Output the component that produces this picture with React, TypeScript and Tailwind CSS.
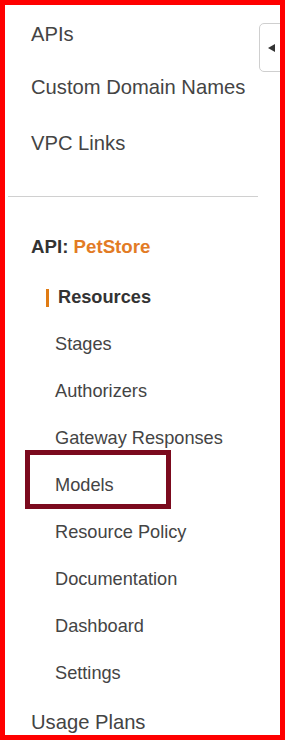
import React from 'react';

const subItems = [
  'Stages',
  'Authorizers',
  'Gateway Responses',
  'Models',
  'Resource Policy',
  'Documentation',
  'Dashboard',
  'Settings',
];

export default function App() {
  return (
    <div className="relative w-[285px] h-[740px] overflow-hidden border-[5px] border-[#ff0000] bg-white text-[#444] font-['Liberation_Sans',Arial,sans-serif]">
      {/* collapse toggle */}
      <button className="absolute top-[18px] right-[-12px] w-[33px] h-[49px] rounded-l-[5px] border border-[#cfcfcf] bg-white flex items-center pl-[8px]">
        <span className="block w-0 h-0 border-y-[4.5px] border-y-transparent border-r-[7px] border-r-[#333]" />
      </button>

      <nav>
        <ul className="text-[20.2px] leading-[24px]">
          <li className="mt-[17px] pl-[26px]">APIs</li>
          <li className="mt-[29px] pl-[26px]">Custom Domain Names</li>
          <li className="mt-[32px] pl-[26px]">VPC Links</li>
        </ul>

        <div className="mt-[41px] ml-[3px] w-[250px] h-px bg-[#d0d0d0]" />

        <div className="mt-[39px] pl-[26px] text-[18.7px] leading-[22px] font-bold text-[#333]">
          API: <span className="text-[#e27b25]">PetStore</span>
        </div>

        <ul className="mt-[16px] text-[18.2px]">
          <li className="relative h-[47px] flex items-center pl-[53px] font-bold text-[#333]">
            <span className="absolute left-[41px] top-[15px] w-[3px] h-[18px] bg-[#e07b13]" />
            Resources
          </li>
          {subItems.map((item) => (
            <li key={item} className="relative h-[47px] flex items-center pl-[50px]">
              {item === 'Models' && (
                <span className="absolute left-[20px] top-[-12px] w-[146px] h-[59px] border-[5px] border-[#7b0a1e]" />
              )}
              {item}
            </li>
          ))}
        </ul>

        <div className="mt-[13px] pl-[26px] text-[20.2px] leading-[24px]">Usage Plans</div>
      </nav>
    </div>
  );
}
